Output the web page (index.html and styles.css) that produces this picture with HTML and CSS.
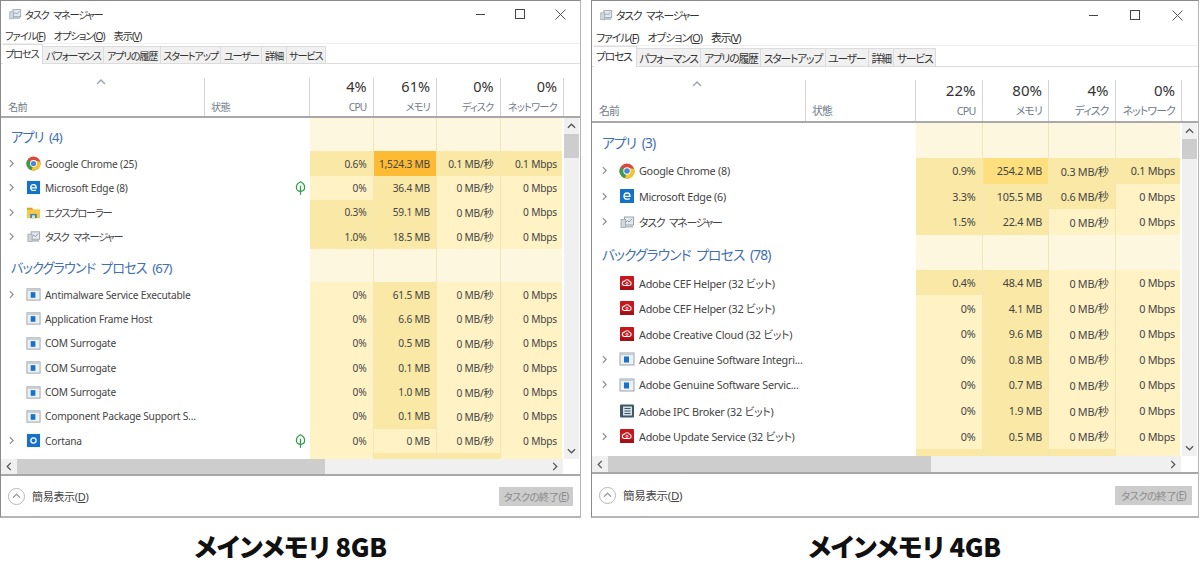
FILE: index.html
```html
<!DOCTYPE html>
<html lang="ja">
<head>
<meta charset="utf-8">
<title>タスク マネージャー</title>
<link rel="stylesheet" href="styles.css">
</head>
<body>
<svg class="defs" width="0" height="0" aria-hidden="true">
  <symbol id="i-chrome" viewBox="0 0 16 16">
    <circle cx="8" cy="8" r="7.5" fill="#d94b3d"/>
    <path d="M8 8 L1.5 4.2 A7.5 7.5 0 0 0 6 15.3 Z" fill="#3d9a4f"/>
    <path d="M8 8 L6 15.3 A7.5 7.5 0 0 0 15.3 6 L8 4.5 Z" fill="#f4c430"/>
    <circle cx="8" cy="8" r="3.7" fill="#fff"/>
    <circle cx="8" cy="8" r="2.8" fill="#4a86d8"/>
  </symbol>
  <symbol id="i-edge" viewBox="0 0 16 16">
    <rect x="1" y="1" width="14" height="14" fill="#1473c8"/>
    <path d="M5 8.4h6C11 6 9.8 5 8.1 5 6.200 5 5 6.400 5 8.200 5 10 6.200 11.200 8.200 11.200c1 0 1.800-.2 2.500-.6" fill="none" stroke="#fff" stroke-width="1.300"/>
  </symbol>
  <symbol id="i-folder" viewBox="0 0 16 16">
    <path d="M1 3h5l1.500 1.500H15V14H1z" fill="#f5c84c"/>
    <rect x="1" y="3" width="6" height="2" fill="#d9a22a"/>
    <rect x="4.500" y="9.500" width="7" height="4.500" fill="#3f87b5"/>
    <rect x="6.500" y="11" width="3" height="3" fill="#f5e7b5"/>
  </symbol>
  <symbol id="i-task" viewBox="0 0 16 16">
    <rect x="5.500" y="3" width="9" height="8" fill="#e4e8eb" stroke="#9aa5ae"/>
    <path d="M6.500 8.500l2-2 1.500 1.500 3-3" fill="none" stroke="#7f9cb8"/>
    <rect x="2" y="5.500" width="4.500" height="8" fill="#d2d6d9" stroke="#9aa5ae" stroke-width=".8"/>
    <rect x="6.500" y="11.500" width="7.500" height="2" fill="#b5bdc3"/>
  </symbol>
  <symbol id="i-app" viewBox="0 0 16 16">
    <rect x="1" y="2" width="14" height="12" fill="#eef0f2" stroke="#9aa3ab"/>
    <rect x="1.500" y="2.500" width="13" height="1.600" fill="#c5ccd2"/>
    <rect x="5" y="5.500" width="5" height="6" fill="#1473c8"/>
  </symbol>
  <symbol id="i-cortana" viewBox="0 0 16 16">
    <rect x="1" y="1" width="14" height="14" fill="#1473c8"/>
    <circle cx="8" cy="8" r="2.800" fill="none" stroke="#fff" stroke-width="1.300"/>
  </symbol>
  <symbol id="i-adobe" viewBox="0 0 16 16">
    <rect x="1" y="1" width="14" height="14" rx="1" fill="#c8161d"/>
    <rect x="1" y="11.500" width="14" height="3.500" fill="#a50f15"/>
    <path d="M5.500 10.500a2.200 2.200 0 0 1 0-4.400C6.800 4.200 9.800 4.500 10.300 6.200a2.200 2.200 0 0 1 .2 4.300z" fill="none" stroke="#fff" stroke-width="1.100"/>
    <circle cx="8" cy="8.300" r="1.100" fill="none" stroke="#fff" stroke-width=".8"/>
  </symbol>
  <symbol id="i-ipc" viewBox="0 0 16 16">
    <rect x="1" y="1.500" width="14" height="13" rx="1" fill="#3d5866"/>
    <rect x="4" y="3.500" width="9" height="9" fill="#d5dfe3"/>
    <path d="M5.500 5.500h6M5.500 8h6M5.500 10.500h6" stroke="#3d5866"/>
  </symbol>
  <symbol id="i-leaf" viewBox="0 0 12 16">
    <path d="M6 1.200C8.600 2.400 10.500 5 10.500 7.500 10.500 10 8.500 11.600 6 11.600S1.500 10 1.500 7.500C1.500 5 3.400 2.400 6 1.200z" fill="#f4fbf5" stroke="#2f9a4e" stroke-width="1.300"/>
    <path d="M6 5.500V15.500" stroke="#2f9a4e" stroke-width="1.300"/>
  </symbol>
  <symbol id="i-close" viewBox="0 0 11 11"><path d="M.5.500l10 10M10.500.500l-10 10" fill="none" stroke="currentColor"/></symbol>
  <symbol id="i-up" viewBox="0 0 10 6"><path d="M1 5l4-4 4 4" fill="none" stroke="currentColor" stroke-width="1.400"/></symbol>
  <symbol id="i-down" viewBox="0 0 10 6"><path d="M1 1l4 4 4-4" fill="none" stroke="currentColor" stroke-width="1.400"/></symbol>
  <symbol id="i-left" viewBox="0 0 6 10"><path d="M5 1L1 5l4 4" fill="none" stroke="currentColor" stroke-width="1.400"/></symbol>
  <symbol id="i-right" viewBox="0 0 6 10"><path d="M1 1l4 4-4 4" fill="none" stroke="currentColor" stroke-width="1.400"/></symbol>
</svg>

<main class="page">
  <div class="windows">

    <section class="win win-a">
      <div class="titlebar">
        <svg class="title-icon"><use href="#i-task"/></svg>
        <span class="title-text">タスク マネージャー</span>
        <div class="controls">
          <span class="ctl"><span class="ctl-min"></span></span>
          <span class="ctl"><span class="ctl-max"></span></span>
          <span class="ctl"><svg class="ctl-close"><use href="#i-close"/></svg></span>
        </div>
      </div>
      <nav class="menu"><span>ファイル(<u>F</u>)</span><span>オプション(<u>O</u>)</span><span>表示(<u>V</u>)</span></nav>
      <div class="tabs"><span class="tab active">プロセス</span><span class="tab">パフォーマンス</span><span class="tab">アプリの履歴</span><span class="tab">スタートアップ</span><span class="tab">ユーザー</span><span class="tab">詳細</span><span class="tab">サービス</span></div>
      <div class="head grid">
        <div class="hc hc-name"><svg class="sort"><use href="#i-up"/></svg><span class="hlabel">名前</span></div>
        <div class="hc hc-status"><span class="hlabel">状態</span></div>
        <div class="hc hm"><span class="pct">4%</span><span class="hlabel">CPU</span></div>
        <div class="hc hm"><span class="pct">61%</span><span class="hlabel">メモリ</span></div>
        <div class="hc hm"><span class="pct">0%</span><span class="hlabel">ディスク</span></div>
        <div class="hc hm"><span class="pct">0%</span><span class="hlabel">ネットワーク</span></div>
      </div>
      <div class="body">
        <div class="list">
          <div class="grid group"><div class="gname">アプリ (4)</div><i></i><b class="g"></b><b class="g"></b><b class="g"></b><b class="g"></b></div>
          <div class="grid row"><div class="name"><svg class="chev"><use href="#i-right"/></svg><svg class="ic"><use href="#i-chrome"/></svg><span>Google Chrome (25)</span></div><i></i><b class="m">0.6%</b><b class="h">1,524.3 MB</b><b class="m">0.1 MB/秒</b><b class="m">0.1 Mbps</b></div>
          <div class="grid row"><div class="name"><svg class="chev"><use href="#i-right"/></svg><svg class="ic"><use href="#i-edge"/></svg><span>Microsoft Edge (8)</span></div><i class="st"><svg class="leaf"><use href="#i-leaf"/></svg></i><b class="l">0%</b><b class="m">36.4 MB</b><b class="l">0 MB/秒</b><b class="l">0 Mbps</b></div>
          <div class="grid row"><div class="name"><svg class="chev"><use href="#i-right"/></svg><svg class="ic"><use href="#i-folder"/></svg><span class="jp">エクスプローラー</span></div><i></i><b class="m">0.3%</b><b class="m">59.1 MB</b><b class="l">0 MB/秒</b><b class="l">0 Mbps</b></div>
          <div class="grid row"><div class="name"><svg class="chev"><use href="#i-right"/></svg><svg class="ic"><use href="#i-task"/></svg><span class="jp">タスク マネージャー</span></div><i></i><b class="m">1.0%</b><b class="m">18.5 MB</b><b class="l">0 MB/秒</b><b class="l">0 Mbps</b></div>
          <div class="grid group"><div class="gname">バックグラウンド プロセス (67)</div><i></i><b class="g"></b><b class="g"></b><b class="g"></b><b class="g"></b></div>
          <div class="grid row"><div class="name"><svg class="chev"><use href="#i-right"/></svg><svg class="ic"><use href="#i-app"/></svg><span>Antimalware Service Executable</span></div><i></i><b class="l">0%</b><b class="m">61.5 MB</b><b class="l">0 MB/秒</b><b class="l">0 Mbps</b></div>
          <div class="grid row"><div class="name"><svg class="chev off"></svg><svg class="ic"><use href="#i-app"/></svg><span>Application Frame Host</span></div><i></i><b class="l">0%</b><b class="m">6.6 MB</b><b class="l">0 MB/秒</b><b class="l">0 Mbps</b></div>
          <div class="grid row"><div class="name"><svg class="chev off"></svg><svg class="ic"><use href="#i-app"/></svg><span>COM Surrogate</span></div><i></i><b class="l">0%</b><b class="m">0.5 MB</b><b class="l">0 MB/秒</b><b class="l">0 Mbps</b></div>
          <div class="grid row"><div class="name"><svg class="chev off"></svg><svg class="ic"><use href="#i-app"/></svg><span>COM Surrogate</span></div><i></i><b class="l">0%</b><b class="m">0.1 MB</b><b class="l">0 MB/秒</b><b class="l">0 Mbps</b></div>
          <div class="grid row"><div class="name"><svg class="chev off"></svg><svg class="ic"><use href="#i-app"/></svg><span>COM Surrogate</span></div><i></i><b class="l">0%</b><b class="m">1.0 MB</b><b class="l">0 MB/秒</b><b class="l">0 Mbps</b></div>
          <div class="grid row"><div class="name"><svg class="chev off"></svg><svg class="ic"><use href="#i-app"/></svg><span>Component Package Support S...</span></div><i></i><b class="l">0%</b><b class="m">0.1 MB</b><b class="l">0 MB/秒</b><b class="l">0 Mbps</b></div>
          <div class="grid row"><div class="name"><svg class="chev"><use href="#i-right"/></svg><svg class="ic"><use href="#i-cortana"/></svg><span>Cortana</span></div><i class="st"><svg class="leaf"><use href="#i-leaf"/></svg></i><b class="l">0%</b><b class="l">0 MB</b><b class="l">0 MB/秒</b><b class="l">0 Mbps</b></div>
          <div class="grid row"><div class="name"><svg class="chev off"></svg><svg class="ic"><use href="#i-app"/></svg></div><i></i><b class="l"></b><b class="m"></b><b class="m"></b><b class="l"></b></div>
        </div>
        <div class="vbar">
          <svg class="vb-arrow"><use href="#i-up"/></svg>
          <div class="vb-thumb"></div>
          <div class="vb-fill"></div>
          <svg class="vb-arrow"><use href="#i-down"/></svg>
        </div>
      </div>
      <div class="hbar">
        <div class="hb-track">
          <svg class="hb-arrow"><use href="#i-left"/></svg>
          <div class="hb-thumb"></div>
          <div class="hb-fill"></div>
          <svg class="hb-arrow"><use href="#i-right"/></svg>
        </div>
      </div>
      <footer class="foot">
        <span class="circle"><svg><use href="#i-up"/></svg></span>
        <span class="less">簡易表示(<u>D</u>)</span>
        <span class="endtask">タスクの終了(<u>E</u>)</span>
      </footer>
    </section>

    <section class="win win-b">
      <div class="titlebar">
        <svg class="title-icon"><use href="#i-task"/></svg>
        <span class="title-text">タスク マネージャー</span>
        <div class="controls">
          <span class="ctl"><span class="ctl-min"></span></span>
          <span class="ctl"><span class="ctl-max"></span></span>
          <span class="ctl"><svg class="ctl-close"><use href="#i-close"/></svg></span>
        </div>
      </div>
      <nav class="menu"><span>ファイル(<u>F</u>)</span><span>オプション(<u>O</u>)</span><span>表示(<u>V</u>)</span></nav>
      <div class="tabs"><span class="tab active">プロセス</span><span class="tab">パフォーマンス</span><span class="tab">アプリの履歴</span><span class="tab">スタートアップ</span><span class="tab">ユーザー</span><span class="tab">詳細</span><span class="tab">サービス</span></div>
      <div class="head grid">
        <div class="hc hc-name"><svg class="sort"><use href="#i-up"/></svg><span class="hlabel">名前</span></div>
        <div class="hc hc-status"><span class="hlabel">状態</span></div>
        <div class="hc hm"><span class="pct">22%</span><span class="hlabel">CPU</span></div>
        <div class="hc hm"><span class="pct">80%</span><span class="hlabel">メモリ</span></div>
        <div class="hc hm"><span class="pct">4%</span><span class="hlabel">ディスク</span></div>
        <div class="hc hm"><span class="pct">0%</span><span class="hlabel">ネットワーク</span></div>
      </div>
      <div class="body">
        <div class="list">
          <div class="grid group"><div class="gname">アプリ (3)</div><i></i><b class="g"></b><b class="g"></b><b class="g"></b><b class="g"></b></div>
          <div class="grid row"><div class="name"><svg class="chev"><use href="#i-right"/></svg><svg class="ic"><use href="#i-chrome"/></svg><span>Google Chrome (8)</span></div><i></i><b class="m">0.9%</b><b class="d">254.2 MB</b><b class="m">0.3 MB/秒</b><b class="m">0.1 Mbps</b></div>
          <div class="grid row"><div class="name"><svg class="chev"><use href="#i-right"/></svg><svg class="ic"><use href="#i-edge"/></svg><span>Microsoft Edge (6)</span></div><i></i><b class="m">3.3%</b><b class="m">105.5 MB</b><b class="m">0.6 MB/秒</b><b class="l">0 Mbps</b></div>
          <div class="grid row"><div class="name"><svg class="chev"><use href="#i-right"/></svg><svg class="ic"><use href="#i-task"/></svg><span class="jp">タスク マネージャー</span></div><i></i><b class="m">1.5%</b><b class="m">22.4 MB</b><b class="l">0 MB/秒</b><b class="l">0 Mbps</b></div>
          <div class="grid group"><div class="gname">バックグラウンド プロセス (78)</div><i></i><b class="g"></b><b class="g"></b><b class="g"></b><b class="g"></b></div>
          <div class="grid row"><div class="name"><svg class="chev off"></svg><svg class="ic"><use href="#i-adobe"/></svg><span>Adobe CEF Helper (32 ビット)</span></div><i></i><b class="m">0.4%</b><b class="m">48.4 MB</b><b class="l">0 MB/秒</b><b class="l">0 Mbps</b></div>
          <div class="grid row"><div class="name"><svg class="chev off"></svg><svg class="ic"><use href="#i-adobe"/></svg><span>Adobe CEF Helper (32 ビット)</span></div><i></i><b class="l">0%</b><b class="m">4.1 MB</b><b class="l">0 MB/秒</b><b class="l">0 Mbps</b></div>
          <div class="grid row"><div class="name"><svg class="chev off"></svg><svg class="ic"><use href="#i-adobe"/></svg><span>Adobe Creative Cloud (32 ビット)</span></div><i></i><b class="l">0%</b><b class="m">9.6 MB</b><b class="l">0 MB/秒</b><b class="l">0 Mbps</b></div>
          <div class="grid row"><div class="name"><svg class="chev"><use href="#i-right"/></svg><svg class="ic"><use href="#i-app"/></svg><span>Adobe Genuine Software Integri...</span></div><i></i><b class="l">0%</b><b class="m">0.8 MB</b><b class="l">0 MB/秒</b><b class="l">0 Mbps</b></div>
          <div class="grid row"><div class="name"><svg class="chev"><use href="#i-right"/></svg><svg class="ic"><use href="#i-app"/></svg><span>Adobe Genuine Software Servic...</span></div><i></i><b class="l">0%</b><b class="m">0.7 MB</b><b class="l">0 MB/秒</b><b class="l">0 Mbps</b></div>
          <div class="grid row"><div class="name"><svg class="chev off"></svg><svg class="ic"><use href="#i-ipc"/></svg><span>Adobe IPC Broker (32 ビット)</span></div><i></i><b class="l">0%</b><b class="m">1.9 MB</b><b class="l">0 MB/秒</b><b class="l">0 Mbps</b></div>
          <div class="grid row"><div class="name"><svg class="chev"><use href="#i-right"/></svg><svg class="ic"><use href="#i-adobe"/></svg><span>Adobe Update Service (32 ビット)</span></div><i></i><b class="l">0%</b><b class="m">0.5 MB</b><b class="l">0 MB/秒</b><b class="l">0 Mbps</b></div>
          <div class="grid row"><div class="name"></div><i></i><b class="m"></b><b class="m"></b><b class="m"></b><b class="l"></b></div>
        </div>
        <div class="vbar">
          <svg class="vb-arrow"><use href="#i-up"/></svg>
          <div class="vb-thumb"></div>
          <div class="vb-fill"></div>
          <svg class="vb-arrow"><use href="#i-down"/></svg>
        </div>
      </div>
      <div class="hbar">
        <div class="hb-track">
          <svg class="hb-arrow"><use href="#i-left"/></svg>
          <div class="hb-thumb"></div>
          <div class="hb-fill"></div>
          <svg class="hb-arrow"><use href="#i-right"/></svg>
        </div>
      </div>
      <footer class="foot">
        <span class="circle"><svg><use href="#i-up"/></svg></span>
        <span class="less">簡易表示(<u>D</u>)</span>
        <span class="endtask">タスクの終了(<u>E</u>)</span>
      </footer>
    </section>

  </div>
  <div class="captions">
    <p class="cap cap-a">メインメモリ 8GB</p>
    <p class="cap cap-b">メインメモリ 4GB</p>
  </div>
</main>
</body>
</html>
```
FILE: styles.css
```css
* { box-sizing: border-box; }
html, body { margin: 0; padding: 0; background: #fff; }
body {
  font-family: "Noto Sans", "Noto Sans CJK JP", sans-serif;
  font-feature-settings: "palt";
  overflow: hidden;
}
.defs { position: absolute; }
.page { width: 1200px; height: 564px; display: flex; flex-direction: column; }
.windows { display: flex; gap: 10px; height: 518px; }

.win {
  display: flex;
  flex-direction: column;
  border: 1px solid #b5b5b5;
  border-top-color: #8a8a8a;
  border-left-color: #8a8a8a;
  border-bottom: 2px solid #b5b5b5;
  background: #fff;
  color: #444;
  height: 518px;
}
.win-a {
  width: 581px;
  --fs: 10.200px;
  --jp-ls: -1.200px;
  --tx-ls: -.2px;
  --title-h: 26px;
  --menu-h: 17px;
  --tab-h: 20px;
  --tab-gap: 14px;
  --head-h: 40px;
  --head-pad: 1px;
  --pct-top: -1px;
  --cols: 204px 105px 63.5px 63.5px 63.5px 63.5px;
  --row-h: 24.4px;
  --group-h: 33.4px;
  --group-fs: 13.2px;
  --ctl-w: 40px;
  --vbar-w: 15px;
  --vbar-gap: 2px;
  --hb-h: 15px;
  --hb-thumb: 308px;
  --ic: 15px;
  --foot-h: 40px;
  --foot-pad: 7px;
  --pct-fs: 14.500px;
  --btn-w: 74px;
  --btn-h: 19px;
  --btn-right: 7px;
  --menu-gap: 9px;
  --menu-left: 4px;
  --tab-left: 2px;
  --tab-pad: 2.600px;
  --name-pad: 8px;
  --less-fs: 11px;
}
.win-b {
  width: 608px;
  --fs: 10.800px;
  --jp-ls: -1.200px;
  --tx-ls: -.25px;
  --title-h: 28px;
  --menu-h: 17px;
  --tab-h: 21px;
  --tab-gap: 13px;
  --head-h: 43px;
  --head-pad: 3px;
  --pct-top: 1px;
  --cols: 214px 110px 66.500px 66.500px 66.500px 66.500px;
  --row-h: 25.6px;
  --group-h: 35px;
  --group-fs: 13.8px;
  --ctl-w: 42px;
  --vbar-w: 15px;
  --vbar-gap: 2px;
  --hb-h: 16px;
  --hb-thumb: 323px;
  --ic: 16px;
  --foot-h: 42px;
  --foot-pad: 7px;
  --pct-fs: 15px;
  --btn-w: 77px;
  --btn-h: 19px;
  --btn-right: 6px;
  --menu-gap: 9px;
  --menu-left: 4px;
  --tab-left: 2px;
  --tab-pad: 2.600px;
  --name-pad: 10px;
  --less-fs: 11.500px;
}

/* title */
.titlebar { display: flex; align-items: center; height: var(--title-h); padding-left: 7px; font-size: var(--fs); letter-spacing: var(--jp-ls); word-spacing: 3px; white-space: nowrap; }
.title-icon { width: 14px; height: 14px; margin-right: 3px; }
.title-text { color: #333; }
.controls { margin-left: auto; display: flex; }
.ctl { width: var(--ctl-w); display: flex; align-items: center; justify-content: center; color: #555; height: 20px; }
.ctl-min { width: 9px; height: 1px; background: #444; }
.ctl-max { width: 10px; height: 10px; border: 1px solid #444; }
.ctl-close { width: 11px; height: 11px; color: #555; }

.menu { display: flex; gap: var(--menu-gap); align-items: center; height: var(--menu-h); padding-left: var(--menu-left); font-size: var(--fs); letter-spacing: -1px; color: #333; border-bottom: 1px solid #eee; white-space: nowrap; }
.tabs { display: flex; align-items: stretch; height: var(--tab-h); padding-left: var(--tab-left); border-bottom: 1px solid #dcdcdc; margin-bottom: var(--tab-gap); font-size: var(--fs); letter-spacing: var(--jp-ls); color: #333; white-space: nowrap; }
.tab { padding: 0 var(--tab-pad); background: #f0f0f0; border: 1px solid #dcdcdc; border-bottom: 0; border-left: 0; display: flex; align-items: center; margin-top: 2px; }
.tab.active { background: #fff; margin-top: 0; padding: 0 4px 2px 2px; margin-bottom: -1px; }

/* grid */
.grid { display: grid; grid-template-columns: var(--cols); }
.head { height: var(--head-h); border-bottom: 2px solid #a8a8a8; padding-right: 17px; flex: none; }
.hc { display: flex; flex-direction: column; border-right: 1px solid #d4d4d4; font-size: var(--fs); position: relative; justify-content: flex-end; padding-bottom: var(--head-pad); white-space: nowrap; min-width: 0; }
.hc:first-child { padding-left: 7px; }
.hc-status { padding-left: 6px; }
.hm { align-items: flex-end; padding-right: 6px; justify-content: space-between; }
.hlabel { color: #6f7b88; letter-spacing: -.8px; line-height: 15px; }
.pct { font-size: var(--pct-fs); color: #333; line-height: 19px; margin-top: var(--pct-top); }
.sort { position: absolute; left: 47%; top: 1px; width: 10px; height: 6px; color: #9aa3ab; }

.body { flex: 1; display: flex; min-height: 0; }
.list { flex: 1; overflow: hidden; }
.row { height: var(--row-h); font-size: var(--fs); letter-spacing: var(--tx-ls); }
.group { height: var(--group-h); }
.gname { color: #3f6fb5; font-size: var(--group-fs); letter-spacing: -.9px; word-spacing: 3px; display: flex; align-items: center; padding: 3px 0 0 10px; white-space: pre; overflow: visible; }
.row b, .group b {
  font-weight: 400;
  display: flex;
  align-items: center;
  justify-content: flex-end;
  padding-right: 6px;
  border-right: 1px solid #f5e6b5;
  color: #444;
}
.g { background: #fef7e0; }
.l { background: #fff3c6; }
.m { background: #f9e8a6; }
.d { background: #fedf7d; }
.h { background: #fdbb35; }
.name { display: flex; align-items: center; padding-left: var(--name-pad); white-space: nowrap; min-width: 0; }
.jp { letter-spacing: var(--jp-ls); word-spacing: 3px; }
.chev { width: 5px; height: 9px; color: #8a8a8a; margin-right: 12px; flex: none; }
.ic { width: var(--ic); height: var(--ic); margin-right: 4px; flex: none; }
.row i { display: flex; align-items: center; justify-content: flex-end; padding-right: 4px; }
.leaf { width: 11px; height: 16px; }

.vbar { width: var(--vbar-w); margin-left: var(--vbar-gap); margin-right: 1px; background: #f0f0f0; display: flex; flex-direction: column; align-items: center; }
.vb-arrow { width: 9px; height: 6px; margin: 5px 0; flex: none; color: #555; }
.vb-thumb { width: 100%; height: 24px; background: #cdcdcd; flex: none; }
.win-b .vb-thumb { height: 20px; }
.vb-fill { flex: 1; }

.hbar { height: calc(var(--hb-h) + 2px); padding-right: 17px; border-bottom: 2px solid #a8a8a8; flex: none; }
.hb-track { height: var(--hb-h); background: #f0f0f0; display: flex; align-items: center; }
.hb-arrow { width: 6px; height: 9px; margin: 0 5px; flex: none; color: #555; }
.hb-thumb { width: var(--hb-thumb); height: 100%; background: #cdcdcd; flex: none; }
.hb-fill { flex: 1; }

.foot { height: var(--foot-h); flex: none; display: flex; align-items: center; padding: 0 var(--btn-right) 0 var(--foot-pad); }
.circle { width: 17px; height: 17px; border: 1px solid #b8b8b8; border-radius: 50%; display: flex; align-items: center; justify-content: center; color: #a0a0a0; margin-right: 7px; }
.circle svg { width: 9px; height: 6px; }
.less { font-size: var(--less-fs); color: #444; letter-spacing: -.3px; }
.endtask { margin-left: auto; width: var(--btn-w); height: var(--btn-h); background: #cccccc; color: #8c8c8c; font-size: 10.500px; letter-spacing: -.7px; display: flex; align-items: center; justify-content: center; white-space: nowrap; }

.captions { flex: 1; display: flex; }
.cap { margin: 0; padding-top: 5px; font-family: "Noto Sans CJK JP", sans-serif; font-weight: 900; font-size: 25.600px; color: #111; line-height: 46px; text-align: center; letter-spacing: -.3px; white-space: nowrap; }
.cap-a { width: 581px; }
.cap-b { width: 608px; margin-left: 11px; padding-left: 17px; }
```
